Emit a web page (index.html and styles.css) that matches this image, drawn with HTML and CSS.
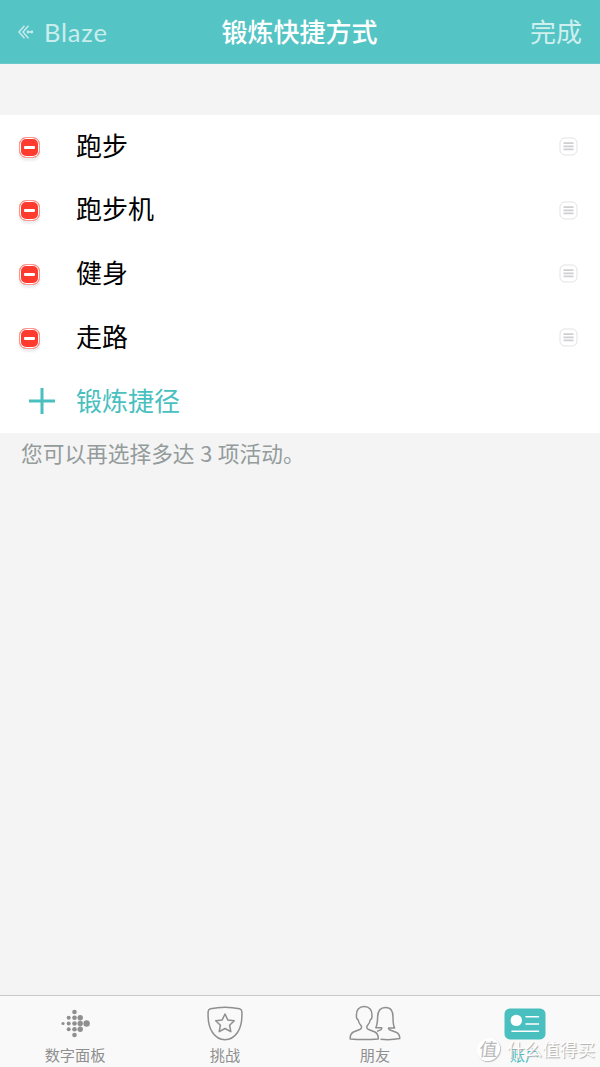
FILE: index.html
```html
<!DOCTYPE html>
<html lang="zh-CN">
  <head>
    <meta charset="UTF-8" />
    <meta name="viewport" content="width=device-width, initial-scale=1.0" />
    <title>锻炼快捷方式</title>
    <link rel="stylesheet" href="styles.css">
  </head>
  <body>
    <header class="navbar">
      <a class="back">
        <svg width="16" height="14" viewBox="0 0 16 14" fill="none" stroke="currentColor" stroke-width="1.4">
          <path d="M6.500 .8 1 7l5.500 6.200M10.500 .8 5 7l5.500 6.200" />
          <path d="M9 7h5" />
          <g fill="currentColor" stroke="none">
            <circle cx="10" cy="7" r="1.400" />
            <circle cx="13.800" cy="7" r="1.400" />
          </g>
        </svg>
        <span>Blaze</span>
      </a>
      <h1>锻炼快捷方式</h1>
      <a class="done">完成</a>
    </header>

    <main>
      <ul class="shortcuts">
        <li>
          <button class="remove"></button>
          <span class="name">跑步</span>
          <svg class="handle" width="19" height="19" viewBox="0 0 19 19"><use href="#handle" /></svg>
        </li>
        <li>
          <button class="remove"></button>
          <span class="name">跑步机</span>
          <svg class="handle" width="19" height="19" viewBox="0 0 19 19"><use href="#handle" /></svg>
        </li>
        <li>
          <button class="remove"></button>
          <span class="name">健身</span>
          <svg class="handle" width="19" height="19" viewBox="0 0 19 19"><use href="#handle" /></svg>
        </li>
        <li>
          <button class="remove"></button>
          <span class="name">走路</span>
          <svg class="handle" width="19" height="19" viewBox="0 0 19 19"><use href="#handle" /></svg>
        </li>
        <li class="add">
          <svg class="plus" width="26" height="26" viewBox="0 0 26 26" stroke="currentColor" stroke-width="3">
            <path d="M13 0v26M0 13h26" />
          </svg>
          <span class="name">锻炼捷径</span>
        </li>
      </ul>
      <p class="hint">您可以再选择多达 3 项活动。</p>
    </main>

    <nav class="tabbar">
      <a class="tab">
        <svg width="30" height="36" viewBox="0 0 30 36" fill="#8f8f8f">
          <circle cx="3" cy="18.500" r="1.600" />
          <circle cx="8.700" cy="12.800" r="2" />
          <circle cx="8.700" cy="18.500" r="2" />
          <circle cx="8.700" cy="24.200" r="2" />
          <circle cx="14.500" cy="7" r="2.300" />
          <circle cx="14.500" cy="12.800" r="2.300" />
          <circle cx="14.500" cy="18.500" r="2.300" />
          <circle cx="14.500" cy="24.200" r="2.300" />
          <circle cx="14.500" cy="30" r="2.300" />
          <circle cx="20.200" cy="12.800" r="2.700" />
          <circle cx="20.200" cy="18.500" r="2.700" />
          <circle cx="20.200" cy="24.200" r="2.700" />
          <circle cx="26.600" cy="18.500" r="3.200" />
        </svg>
        <span>数字面板</span>
      </a>
      <a class="tab">
        <svg width="36" height="36" viewBox="0 0 36 36" fill="none" stroke="#8f8f8f" stroke-width="1.500">
          <path d="M1.200 6.400Q1.300 4.200 3.400 3.700Q18 .6 32.600 3.700Q34.700 4.200 34.800 6.400C35.400 15.500 34.500 21.500 30.500 27.500Q25.500 34.700 18 34.700Q10.500 34.700 5.500 27.500C1.500 21.500 .6 15.500 1.200 6.400Z" />
          <path d="M18 9 20.800 14.900 27.300 15.700 22.600 20.200 23.800 26.700 18 23.500 12.200 26.700 13.400 20.200 8.700 15.700 15.200 14.900Z" stroke-linejoin="round" />
        </svg>
        <span>挑战</span>
      </a>
      <a class="tab">
        <svg width="52" height="36" viewBox="0 0 52 36" fill="none" stroke="#8f8f8f" stroke-width="1.500" stroke-linejoin="round">
          <path d="M1.200 33.900Q.9 28.800 4.500 27L11.300 24.300Q13 23.500 12.400 21.100Q9.600 18.300 9.200 15Q7 13.800 7.500 10.800C7.100 4.800 10 1.600 15.200 1.600S23.300 4.800 22.900 10.800Q23.400 13.800 21.200 15Q20.800 18.300 18 21.100Q17.400 23.500 19.100 24.300L25.900 27Q29.500 28.800 29.200 33.900Q15.200 35.300 1.200 33.900Z" />
          <path d="M31.500 34.200Q41 35.300 50.800 33.600Q50.700 28.700 47 27.300L40.500 24.800Q39.400 24.300 39.600 22.900H45.600Q44 20.300 44 12.300C44 5.800 42 2.600 36.400 2.600S28.800 5.800 28.600 12.300C28.500 18.300 28 20.300 26.800 22.700H32.700Q33 24.300 31.700 24.900L28 26.400" />
        </svg>
        <span>朋友</span>
      </a>
      <a class="tab active">
        <svg width="42" height="36" viewBox="0 0 42 36">
          <rect x=".5" y="3.400" width="41" height="31" rx="5.500" fill="#49bfc0" />
          <circle cx="12.300" cy="15.400" r="5.700" fill="#fff" />
          <path d="M22 11.700H34.500M22 19H34.500M8 26.300H34.500" stroke="#fff" stroke-width="1.500" stroke-linecap="round" />
        </svg>
        <span>账户</span>
      </a>
    </nav>

    <div class="watermark">
      <span class="seal">值</span>
      <span class="brand">什么值得买</span>
    </div>

    <svg width="0" height="0" class="defs">
      <symbol id="handle" viewBox="0 0 19 19">
        <rect x="1" y="1" width="17" height="17" rx="5" fill="#fff" stroke="#e3e3e5" />
        <path d="M4.500 6.200h10M4.500 9.300h10M4.500 12.400h10" stroke="#cfcfd3" stroke-width="1.700" />
      </symbol>
    </svg>
  </body>
</html>
```
FILE: styles.css
```css
* {
  box-sizing: border-box;
}

body {
  margin: 0;
  height: 1067px;
  display: flex;
  flex-direction: column;
  position: relative;
  overflow: hidden;
  background-color: #f4f4f4;
  font-family: "Noto Sans CJK SC", sans-serif;
}

.navbar {
  height: 64px;
  padding: 0 18px;
  display: grid;
  grid-template-columns: 1fr auto 1fr;
  align-items: center;
  background-color: #55c4c5;
  border-bottom: 1px solid #6bc8c9;
  color: #fff;
  font-size: 26px;
  line-height: 62px;
}

.navbar h1 {
  margin: 0 1px 2px 0;
  font-size: 26px;
  font-weight: 500;
}

.back {
  display: flex;
  align-items: center;
  gap: 10px;
  color: #c9eded;
  font-family: Lato, sans-serif;
  font-size: 25.5px;
  letter-spacing: 0.8px;
}

.done {
  margin-bottom: 2px;
  color: #d0efef;
  text-align: right;
}

main {
  flex: 1;
}

.shortcuts {
  height: 318px;
  margin: 51px 0 0;
  padding: 0;
  display: grid;
  grid-template-rows: repeat(5, 1fr);
  list-style: none;
  background-color: #fff;
}

.shortcuts li {
  display: grid;
  grid-template-columns: 57px 1fr 19px;
  align-items: center;
  padding: 0 22px 0 19px;
  font-size: 26px;
  line-height: 58px;
  color: #000;
}

.name {
  padding-bottom: 4px;
}

.remove {
  width: 21px;
  height: 21px;
  margin-top: 1px;
  padding: 0;
  display: flex;
  align-items: center;
  justify-content: center;
  background-color: #ff3b30;
  border: 1px solid #ff958f;
  border-radius: 7px;
  box-shadow: inset 0 0 0 1px #fff, 0 3px 2px #efefef;
}

.remove::before {
  content: "";
  width: 11px;
  height: 3px;
  border-radius: 1px;
  background-color: #fff;
}

.shortcuts .add {
  color: #49bfc0;
}

.add .name {
  padding-bottom: 2px;
}

.plus {
  margin-left: 10px;
}

.hint {
  margin: 0;
  padding-left: 21px;
  font-size: 21.7px;
  line-height: 40px;
  word-spacing: 0.8px;
  color: #939b9b;
}

.tabbar {
  height: 72px;
  display: grid;
  grid-template-columns: repeat(4, 1fr);
  border-top: 1px solid #c9c9c9;
  background-color: #f9f9f9;
}

.tab {
  padding-top: 9px;
  display: flex;
  flex-direction: column;
  align-items: center;
  color: #8f8f8f;
  font-size: 15.2px;
  line-height: 26px;
}

.tab.active {
  color: #49bfc0;
}

.watermark {
  position: absolute;
  right: 5px;
  bottom: 5px;
  display: flex;
  align-items: center;
  gap: 7px;
  line-height: 26px;
  color: #fff;
  text-shadow: 1px 1px 1px #aaa;
}

.seal {
  width: 23px;
  height: 23px;
  border-radius: 50%;
  background-color: #fff;
  box-shadow: 1px 1px 1px #bbb;
  color: #bbb;
  font-size: 18px;
  line-height: 21px;
  text-align: center;
  text-shadow: none;
  transform: skewX(-6deg);
}

.brand {
  font-size: 17.6px;
}

.defs {
  position: absolute;
}
```
